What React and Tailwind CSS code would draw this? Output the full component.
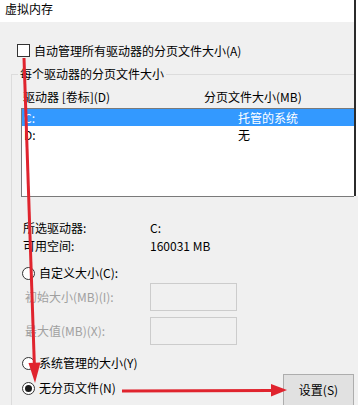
import React from "react";

const font = "font-['Noto_Sans_CJK_SC','Noto_Sans',sans-serif]";

const Radio = ({ checked, label }) => (
  <div className="flex items-center gap-[4px] pl-[10px] h-[16px]">
    <div className="w-[13px] h-[13px] rounded-full border border-[#333] bg-white flex items-center justify-center">
      {checked && <div className="w-[7px] h-[7px] rounded-full bg-[#1a1a1a]" />}
    </div>
    <span>{label}</span>
  </div>
);

const Arrows = () => (
  <svg
    className="absolute left-0 top-0 pointer-events-none"
    width="358"
    height="405"
    viewBox="0 0 358 405"
  >
    <line x1="24" y1="58" x2="34.4" y2="366" stroke="#e0242e" strokeWidth="3" />
    <polygon points="35,383 28.5,363 40.5,362.6" fill="#e0242e" />
    <line x1="122" y1="391" x2="272" y2="390.5" stroke="#e0242e" strokeWidth="3" />
    <polygon points="287,390 271,384 271,396.5" fill="#e0242e" />
  </svg>
);

export default function App() {
  return (
    <div className={`relative w-[358px] h-[405px] overflow-hidden flex text-[12px] leading-[16px] text-black ${font}`}>
      <div className="w-[354px] flex flex-col">
        <div className="h-[22px] shrink-0 bg-white pl-[5px] pt-[1px]">虚拟内存</div>

        <div className="flex-1 bg-[#f0f0f0] flex flex-col">
          <div className="mt-[22px] ml-[17px] shrink-0 flex items-center gap-[4px] h-[13px]">
            <div className="w-[13px] h-[13px] border border-[#333] bg-white" />
            <span>自动管理所有驱动器的分页文件大小(A)</span>
          </div>

          <div className="mt-[17px] ml-[11px] flex-1 border-l border-t border-[#dcdcdc] flex flex-col">
            <div className="-mt-[9px] ml-[6px] px-[2px] w-fit bg-[#f0f0f0]">每个驱动器的分页文件大小</div>

            <div className="mt-[7px] pl-[11px] flex">
              <span className="w-[181px]">驱动器 [卷标](D)</span>
              <span>分页文件大小(MB)</span>
            </div>

            <div className="mt-[3px] ml-[9px] h-[89px] shrink-0 bg-white border-l border-t border-b border-[#7a7a7a]">
              <div className="h-[17px] bg-[#3399ff] text-white flex items-center pl-[2px]">
                <span className="w-[214px]">C:</span>
                <span>托管的系统</span>
              </div>
              <div className="h-[17px] flex items-center pl-[2px]">
                <span className="w-[214px]">D:</span>
                <span>无</span>
              </div>
            </div>

            <div className="mt-[23px] pl-[11px] flex">
              <span className="w-[127px]">所选驱动器:</span>
              <span>C:</span>
            </div>
            <div className="mt-[2px] pl-[11px] flex">
              <span className="w-[127px]">可用空间:</span>
              <span>160031 MB</span>
            </div>

            <div className="mt-[11px]">
              <Radio label="自定义大小(C):" />
            </div>

            <div className="mt-[2px] pl-[13px] flex items-center text-[#a0a0a0]">
              <span className="w-[125px]">初始大小(MB)(I):</span>
              <div className="w-[87px] h-[28px] border border-[#cccccc]" />
            </div>
            <div className="mt-[6px] pl-[13px] flex items-center text-[#a0a0a0]">
              <span className="w-[125px]">最大值(MB)(X):</span>
              <div className="w-[87px] h-[28px] border border-[#cccccc]" />
            </div>

            <div className="mt-[10px]">
              <Radio label="系统管理的大小(Y)" />
            </div>

            <div className="mt-[3px] flex items-start justify-between">
              <div className="mt-[6px]">
                <Radio checked label="无分页文件(N)" />
              </div>
              <div className="w-[71px] h-[40px] shrink-0 bg-[#e1e1e1] border border-[#adadad] flex justify-center pt-[7px]">
                设置(S)
              </div>
            </div>
          </div>
        </div>
      </div>

      <div className="w-[4px] flex flex-col">
        <div className="h-[196px] shrink-0 bg-white border-l-2 border-[#2b2b2b]" />
        <div className="flex-1 bg-[#f0f0f0]" />
      </div>

      <Arrows />
    </div>
  );
}
